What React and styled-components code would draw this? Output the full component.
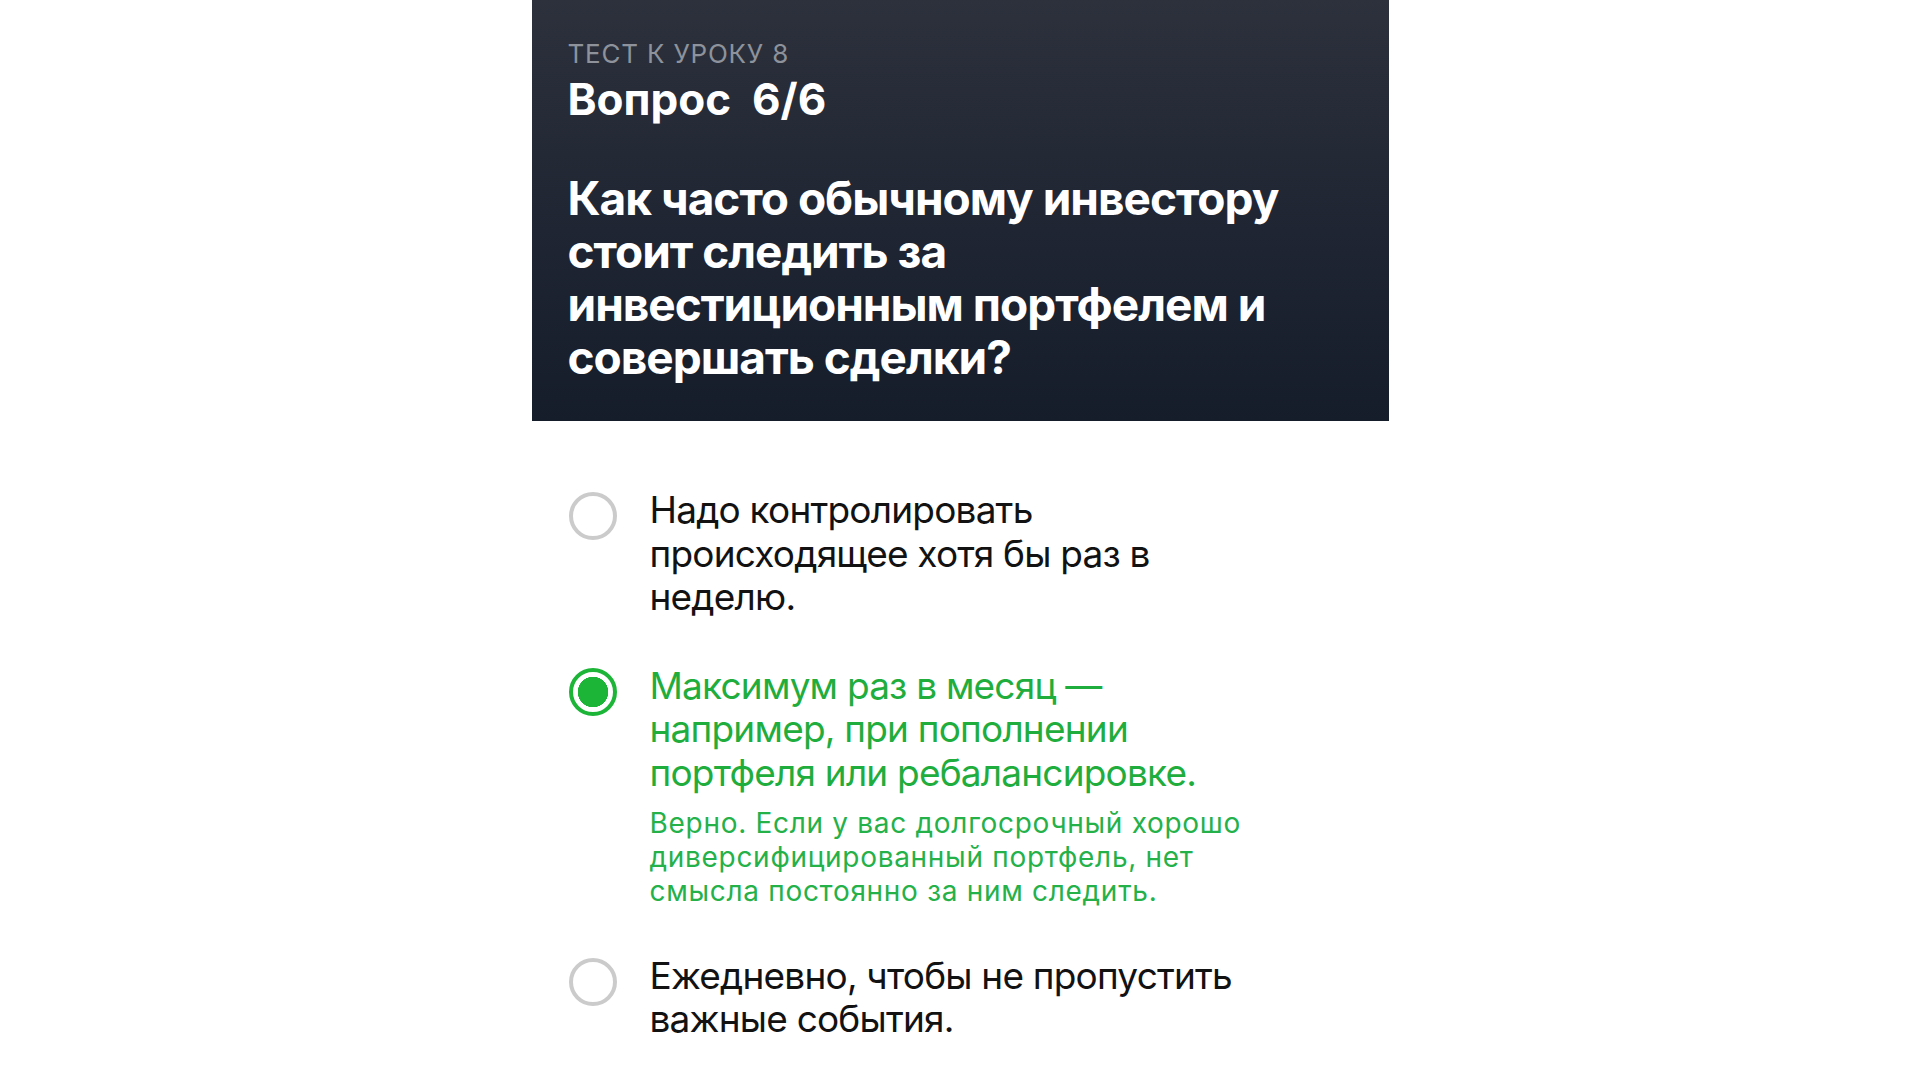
import React from "react";
import styled, { createGlobalStyle } from "styled-components";

const GlobalStyle = createGlobalStyle`
  html, body {
    margin: 0;
    padding: 0;
    background: #ffffff;
  }
  body {
    font-family: Inter, "Noto Sans", sans-serif;
    -webkit-font-smoothing: antialiased;
  }
`;

const answers = [
  {
    id: 1,
    text: "Надо контролировать происходящее хотя бы раз в неделю.",
  },
  {
    id: 2,
    text: "Максимум раз в месяц — например, при пополнении портфеля или ребалансировке.",
    correct: true,
    note: "Верно. Если у вас долгосрочный хорошо диверсифицированный портфель, нет смысла постоянно за ним следить.",
  },
  {
    id: 3,
    text: "Ежедневно, чтобы не пропустить важные события.",
  },
];

export default function App() {
  return (
    <>
      <GlobalStyle />
      <Page>
        <Column>
          <Header>
            <Label>Тест к уроку 8</Label>
            <Title>Вопрос&nbsp; 6/6</Title>
            <Question>
              Как часто обычному инвестору стоит следить за инвестиционным
              портфелем и совершать сделки?
            </Question>
          </Header>
          <Answers>
            {answers.map((a) => (
              <Answer key={a.id}>
                <Radio $checked={a.correct} />
                <AnswerBody>
                  <AnswerText $correct={a.correct}>{a.text}</AnswerText>
                  {a.note && <Note>{a.note}</Note>}
                </AnswerBody>
              </Answer>
            ))}
          </Answers>
        </Column>
      </Page>
    </>
  );
}

const Page = styled.div`
  width: 100%;
  min-height: 1080px;
  display: flex;
  justify-content: center;
`;

const Column = styled.div`
  width: 857px;
  display: flex;
  flex-direction: column;
`;

const Header = styled.div`
  height: 421px;
  box-sizing: border-box;
  padding: 38px 36px 0;
  background: linear-gradient(180deg, #2c313c 0%, #1f2532 55%, #161d2a 100%);
  display: flex;
  flex-direction: column;
`;

const Label = styled.div`
  font-size: 26px;
  line-height: 32px;
  color: #8d929b;
  text-transform: uppercase;
  letter-spacing: 0.8px;
`;

const Title = styled.div`
  margin-top: 3px;
  font-size: 44px;
  line-height: 52px;
  font-weight: 700;
  color: #ffffff;
`;

const Question = styled.div`
  margin-top: 47px;
  font-size: 46px;
  line-height: 53px;
  font-weight: 700;
  color: #ffffff;
  letter-spacing: -1px;
  width: 740px;
`;

const Answers = styled.div`
  padding: 67px 0 0 37px;
  display: flex;
  flex-direction: column;
  gap: 45px;
`;

const Answer = styled.div`
  display: flex;
  align-items: flex-start;
  gap: 33px;
`;

const Radio = styled.div`
  flex: none;
  width: 48px;
  height: 48px;
  margin-top: 4px;
  box-sizing: border-box;
  border-radius: 50%;
  border: 4px solid ${(p) => (p.$checked ? "#1cb538" : "#cbcbcb")};
  background: ${(p) =>
    p.$checked ? "radial-gradient(circle, #1cb538 0 15px, #fff 15.5px)" : "#fff"};
`;

const AnswerBody = styled.div`
  display: flex;
  flex-direction: column;
  width: 586px;
`;

const AnswerText = styled.div`
  font-size: 37px;
  line-height: 43.6px;
  letter-spacing: -0.8px;
  color: ${(p) => (p.$correct ? "#1fad3d" : "#121212")};
`;

const Note = styled.div`
  margin-top: 11px;
  font-size: 28px;
  line-height: 34.4px;
  letter-spacing: 0.7px;
  color: #25b14a;
  width: 640px;
`;
